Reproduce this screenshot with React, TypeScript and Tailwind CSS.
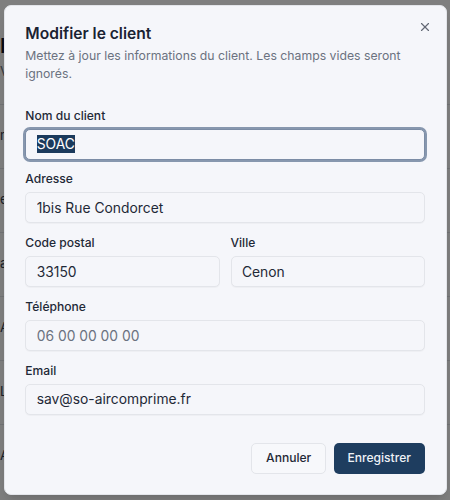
import { X } from 'lucide-react'

// Edit-client dialog shown over the clients page (scaled ~0.865 from a 512px dialog).

type Field = { label: string; value?: string; placeholder?: string }

const inputBase =
  'flex h-[31px] w-full items-center rounded-[5px] border border-[#e3e5ea] bg-[#f5f6fa] px-[10.4px] text-[13.85px] text-[#1f2937] shadow-[0_1px_1px_rgba(0,0,0,0.03)] outline-none placeholder:text-[#6b7280]'

function TextField({ label, value, placeholder }: Field) {
  return (
    <div className="flex flex-col gap-[6.9px]">
      <label className="text-[12.1px] leading-[12.1px] font-medium text-[#1f2937]">{label}</label>
      <input className={inputBase} defaultValue={value} placeholder={placeholder} readOnly />
    </div>
  )
}

function BackgroundPage() {
  return (
    <div className="flex h-full flex-col bg-white">
      <div className="px-0 pt-[34px]">
        <div className="text-[20px] leading-[24px] font-semibold text-[#111827]">I</div>
        <div className="mt-[4px] text-[13px] text-[#6b7280]">V</div>
      </div>
      <div className="mt-[22px] flex flex-col">
        {['n', 'e', 'a', 'A', 'L', 'A'].map((t, i) => (
          <div key={i} className="flex h-[64px] items-center border-t border-[#e5e7eb] text-[13px] text-[#374151]">{t}</div>
        ))}
      </div>
    </div>
  )
}

export default function App() {
  return (
    <div className="relative h-[500px] w-[450px] overflow-hidden font-['Inter','Noto_Sans',sans-serif]">
      <BackgroundPage />
      <div className="absolute inset-0 bg-black/50" />
      <div className="absolute inset-0 flex items-center justify-center">
        <div className="relative flex w-[443px] flex-col gap-[13.85px] rounded-[7px] border border-[#e3e5ea] bg-[#f5f6fa] p-[20.8px] shadow-lg">
          <button className="absolute top-[14px] right-[14px] text-[#3f4654] opacity-80" aria-label="Fermer">
            <X size={14} strokeWidth={2} />
          </button>

          <header className="flex flex-col gap-[5.2px]">
            <h2 className="text-[15.6px] leading-[15.6px] font-semibold text-[#1a2232]">Modifier le client</h2>
            <p className="text-[12.25px] leading-[17.3px] text-[#6b7280]">
              Mettez à jour les informations du client. Les champs vides seront ignorés.
            </p>
          </header>

          <form className="flex flex-col gap-[13.85px] py-[13.85px]">
            <div className="flex flex-col gap-[6.9px]">
              <label className="text-[12.1px] leading-[12.1px] font-medium text-[#1f2937]">Nom du client</label>
              <div className="flex h-[31px] w-full items-center rounded-[5px] border border-[#7b8ca5] bg-[#f5f6fa] px-[10.4px] text-[13.85px] text-[#1f2937] ring-2 ring-[#8797ae]">
                <span className="bg-[#1b3a5c] leading-[18px] text-white">SOAC</span>
              </div>
            </div>
            <TextField label="Adresse" value="1bis Rue Condorcet" />
            <div className="grid grid-cols-2 gap-[11px]">
              <TextField label="Code postal" value="33150" />
              <TextField label="Ville" value="Cenon" />
            </div>
            <TextField label="Téléphone" placeholder="06 00 00 00 00" />
            <TextField label="Email" value="sav@so-aircomprime.fr" />
          </form>

          <div className="flex justify-end gap-[7.5px]">
            <button className="h-[31px] rounded-[5px] border border-[#e3e5ea] bg-[#f7f8fb] px-[13.8px] text-[12.1px] font-medium text-[#1f2937]">
              Annuler
            </button>
            <button className="h-[31px] rounded-[5px] bg-[#1e3d5f] px-[13.8px] text-[12.1px] font-medium text-[#eef2f7]">
              Enregistrer
            </button>
          </div>
        </div>
      </div>
    </div>
  )
}
